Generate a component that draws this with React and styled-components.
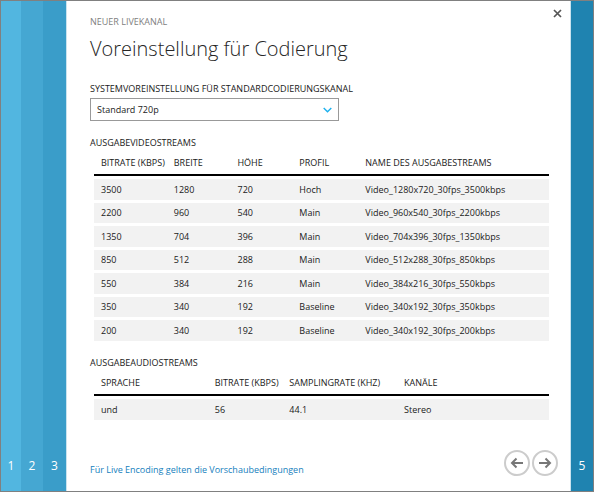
import React, { useState } from "react";
import styled, { createGlobalStyle } from "styled-components";

const GlobalStyle = createGlobalStyle`
  *, *::before, *::after { box-sizing: border-box; }
  body {
    margin: 0;
    background: #fff;
    color: #1a1a1a;
    font: 9px/12px "Open Sans", "Noto Sans", sans-serif;
  }
  h1, h2, p { margin: 0; font-weight: 400; }
  button, select { font: inherit; color: inherit; }
`;

const Wizard = styled.div`
  display: flex;
  min-height: 100vh;
  border: 1px solid #808080;
`;

const Step = styled.button`
  flex: none;
  display: flex;
  align-items: flex-end;
  justify-content: center;
  width: ${(p) => p.$width}px;
  padding: 0 0 17px;
  border: 0;
  background: ${(p) => p.$color};
  color: #fff;
  font-size: 12px;
  line-height: 16px;
  cursor: pointer;
`;

const Panel = styled.main`
  flex: 1;
  min-width: 0;
  display: flex;
  flex-direction: column;
  padding: 6px 6px 15px 23px;
  border: solid #c9e3ef;
  border-width: 0 1px;
`;

const TopBar = styled.header`
  display: flex;
  justify-content: space-between;
  align-items: flex-start;
`;

const Eyebrow = styled.p`
  padding-top: 9px;
  color: #808080;
`;

const CloseButton = styled.button`
  display: flex;
  padding: 2px;
  border: 0;
  background: none;
  color: #555;
  cursor: pointer;
`;

const Title = styled.h1`
  margin-top: 7px;
  color: #262626;
  font-size: 20px;
  font-weight: 300;
  line-height: 28px;
`;

const Field = styled.div`
  display: flex;
  flex-direction: column;
  margin-top: 20px;
`;

const SelectBox = styled.div`
  display: grid;
  width: 249px;
  max-width: 100%;
  margin-top: 3px;
  align-items: center;

  & > * { grid-area: 1 / 1; }
`;

const Select = styled.select`
  appearance: none;
  width: 100%;
  height: 23px;
  padding: 0 24px 0 6px;
  border: 1px solid #999;
  border-radius: 0;
  background: #fff;
`;

const SelectArrow = styled.svg`
  justify-self: end;
  margin-right: 7px;
  pointer-events: none;
`;

const Section = styled.section`
  margin-top: 16px;
`;

const SectionTitle = styled.h2`
  font-size: 9px;
  line-height: 12px;
`;

const TableFrame = styled.div`
  margin: 5px 15px 0 4px;
`;

const Table = styled.table`
  width: 100%;
  table-layout: fixed;
  border-collapse: separate;
  border-spacing: 0;
`;

const Col = styled.col`
  width: ${(p) => (p.$width ? `${p.$width}%` : "auto")};
`;

const HeadCell = styled.th`
  height: 22px;
  padding: 0 0 3px 7px;
  border-bottom: 2px solid #000;
  font-weight: 400;
  text-align: left;
  white-space: nowrap;
`;

const Row = styled.tr`
  height: 24px;

  &:nth-child(even) { height: 23px; }
`;

const Cell = styled.td`
  padding: 0 0 0 7px;
  border-top: 3px solid #fff;
  background: #f2f2f2;
  white-space: nowrap;
`;

const Footer = styled.footer`
  display: flex;
  align-items: center;
  justify-content: space-between;
  margin-top: auto;
  padding-right: 6px;
`;

const PreviewLink = styled.a`
  padding-top: 14px;
  color: #1580bd;
  text-decoration: none;
`;

const Pager = styled.nav`
  display: flex;
  gap: 2px;
`;

const RoundButton = styled.button`
  display: flex;
  align-items: center;
  justify-content: center;
  width: 26px;
  height: 26px;
  padding: 0;
  border: 2px solid #ccc;
  border-radius: 50%;
  background: #fff;
  color: #777;
  cursor: pointer;
`;

const ArrowIcon = ({ d }) => (
  <svg width="14" height="12" viewBox="0 0 14 12" fill="none" stroke="currentColor" strokeWidth="2" aria-hidden="true">
    <path d={d} />
  </svg>
);

const videoColumns = [
  { label: "BITRATE (KBPS)", width: 16 },
  { label: "BREITE", width: 14 },
  { label: "HÖHE", width: 13.6 },
  { label: "PROFIL", width: 14.5 },
  { label: "NAME DES AUSGABESTREAMS" },
];

const videoRows = [
  ["3500", "1280", "720", "Hoch", "Video_1280x720_30fps_3500kbps"],
  ["2200", "960", "540", "Main", "Video_960x540_30fps_2200kbps"],
  ["1350", "704", "396", "Main", "Video_704x396_30fps_1350kbps"],
  ["850", "512", "288", "Main", "Video_512x288_30fps_850kbps"],
  ["550", "384", "216", "Main", "Video_384x216_30fps_550kbps"],
  ["350", "340", "192", "Baseline", "Video_340x192_30fps_350kbps"],
  ["200", "340", "192", "Baseline", "Video_340x192_30fps_200kbps"],
];

const audioColumns = [
  { label: "SPRACHE", width: 25 },
  { label: "BITRATE (KBPS)", width: 16.4 },
  { label: "SAMPLINGRATE (KHZ)", width: 25.2 },
  { label: "KANÄLE" },
];

const audioRows = [["und", "56", "44.1", "Stereo"]];

function StreamTable({ id, title, columns, rows }) {
  return (
    <Section>
      <SectionTitle id={id}>{title}</SectionTitle>
      <TableFrame>
        <Table aria-labelledby={id}>
          <colgroup>
            {columns.map((c) => (
              <Col key={c.label} $width={c.width} />
            ))}
          </colgroup>
          <thead>
            <tr>
              {columns.map((c) => (
                <HeadCell key={c.label} scope="col">{c.label}</HeadCell>
              ))}
            </tr>
          </thead>
          <tbody>
            {rows.map((row) => (
              <Row key={row.join()}>
                {row.map((value, i) => (
                  <Cell key={columns[i].label}>{value}</Cell>
                ))}
              </Row>
            ))}
          </tbody>
        </Table>
      </TableFrame>
    </Section>
  );
}

export default function App() {
  const [preset, setPreset] = useState("720p");

  return (
    <>
      <GlobalStyle />
      <Wizard>
        <Step type="button" $width={20} $color="#52b6e0">1</Step>
        <Step type="button" $width={22} $color="#45a7d2">2</Step>
        <Step type="button" $width={23} $color="#3a9dc9">3</Step>
        <Panel>
          <TopBar>
            <Eyebrow>NEUER LIVEKANAL</Eyebrow>
            <CloseButton type="button" aria-label="Schließen">
              <svg width="9" height="9" viewBox="0 0 9 9" stroke="currentColor" strokeWidth="1.7" aria-hidden="true">
                <path d="M1 1l7 7M8 1L1 8" />
              </svg>
            </CloseButton>
          </TopBar>
          <Title>Voreinstellung für Codierung</Title>

          <Field>
            <label htmlFor="preset">SYSTEMVOREINSTELLUNG FÜR STANDARDCODIERUNGSKANAL</label>
            <SelectBox>
              <Select id="preset" value={preset} onChange={(e) => setPreset(e.target.value)}>
                <option value="720p">Standard 720p</option>
              </Select>
              <SelectArrow width="9" height="6" viewBox="0 0 9 6" fill="none" stroke="#1bb0ee" strokeWidth="1.4" aria-hidden="true">
                <path d="M.7 1l3.8 3.8L8.3 1" />
              </SelectArrow>
            </SelectBox>
          </Field>

          <StreamTable id="video" title="AUSGABEVIDEOSTREAMS" columns={videoColumns} rows={videoRows} />
          <StreamTable id="audio" title="AUSGABEAUDIOSTREAMS" columns={audioColumns} rows={audioRows} />

          <Footer>
            <PreviewLink href="#vorschau">Für Live Encoding gelten die Vorschaubedingungen</PreviewLink>
            <Pager aria-label="Schritte">
              <RoundButton type="button" aria-label="Zurück">
                <ArrowIcon d="M13 6H2M6.5 1.5L2 6l4.5 4.5" />
              </RoundButton>
              <RoundButton type="button" aria-label="Weiter">
                <ArrowIcon d="M1 6h11M7.5 1.5L12 6l-4.500 4.500" />
              </RoundButton>
            </Pager>
          </Footer>
        </Panel>
        <Step type="button" $width={22} $color="#1f83b0">5</Step>
      </Wizard>
    </>
  );
}
